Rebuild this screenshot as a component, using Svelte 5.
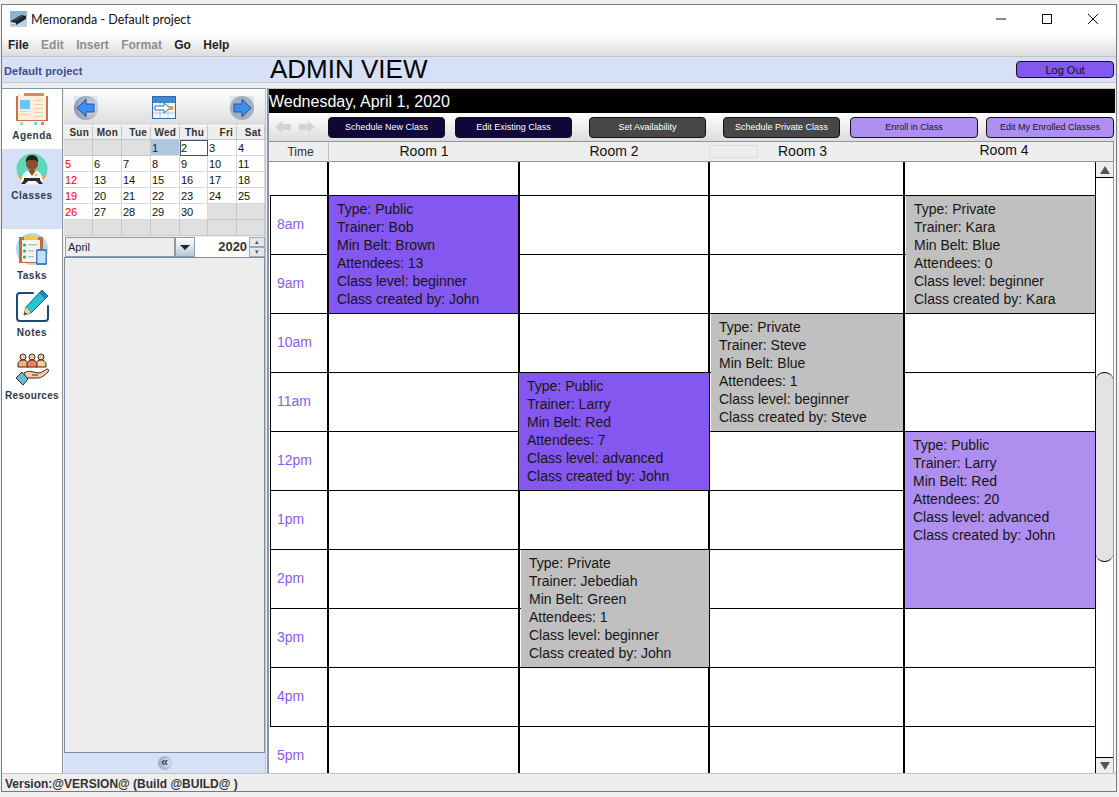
<script>
	const menus = [
		{ label: 'File' },
		{ label: 'Edit', off: true },
		{ label: 'Insert', off: true },
		{ label: 'Format', off: true },
		{ label: 'Go' },
		{ label: 'Help' }
	];
	const weekdays = ['Sun', 'Mon', 'Tue', 'Wed', 'Thu', 'Fri', 'Sat'];
	// April 2020 starts on a Wednesday, 6 rows of 7 cells
	const days = Array.from({ length: 42 }, (_, i) => {
		const n = i - 2;
		return n >= 1 && n <= 30 ? n : null;
	});
	const buttons = [
		{ label: 'Schedule New Class', kind: 'navy' },
		{ label: 'Edit Existing Class', kind: 'navy' },
		{ label: 'Set Availability', kind: 'slate' },
		{ label: 'Schedule Private Class', kind: 'slate' },
		{ label: 'Enroll in Class', kind: 'lilac' },
		{ label: 'Edit My Enrolled Classes', kind: 'lilac' }
	];
	const hours = ['', '8am', '9am', '10am', '11am', '12pm', '1pm', '2pm', '3pm', '4pm', '5pm'];
	const rooms = [2, 3, 4, 5];
	const events = [
		{ col: 2, row: 2, span: 2, left: 2, right: 0, kind: 'public', type: 'Public', trainer: 'Bob', belt: 'Brown', count: 13, level: 'beginner', by: 'John' },
		{ col: 5, row: 2, span: 2, left: 3, right: 1, kind: 'private', type: 'Private', trainer: 'Kara', belt: 'Blue', count: 0, level: 'beginner', by: 'Kara' },
		{ col: 4, row: 4, span: 2, left: 3, right: 0, kind: 'private', type: 'Private', trainer: 'Steve', belt: 'Blue', count: 1, level: 'beginner', by: 'Steve' },
		{ col: 3, row: 5, span: 2, left: 1, right: -1, kind: 'public', type: 'Public', trainer: 'Larry', belt: 'Red', count: 7, level: 'advanced', by: 'John' },
		{ col: 3, row: 8, span: 2, left: 3, right: -1, kind: 'private', type: 'Private', trainer: 'Jebediah', belt: 'Green', count: 1, level: 'beginner', by: 'John' },
		{ col: 5, row: 6, span: 3, left: 2, right: 1, kind: 'enrolled', type: 'Public', trainer: 'Larry', belt: 'Red', count: 20, level: 'advanced', by: 'John' }
	];
</script>

<div class="window">
	<div class="top">
		<div class="titlebar">
			<svg class="appicon" viewBox="0 0 17 16">
				<rect width="17" height="16" fill="#b9d3e6" />
				<path d="M0 0h17v6L0 11z" fill="#8fb4d0" />
				<path d="M1 10l10-6 5 1v3L6 14 1 13z" fill="#20262c" />
				<path d="M1 11l5 1v2l-5-1z" fill="#d8dde0" />
				<path d="M4 9l8-5 2 .5-8 5z" fill="#46525c" />
			</svg>
			<span class="title">Memoranda - Default project</span>
			<div class="controls">
				<svg viewBox="0 0 12 12"><path d="M1 6h10" stroke="#111" fill="none" /></svg>
				<svg viewBox="0 0 12 12"><rect x="1.5" y="1.5" width="9" height="9" stroke="#111" fill="none" /></svg>
				<svg viewBox="0 0 12 12"><path d="M1 1l10 10M11 1L1 11" stroke="#111" fill="none" /></svg>
			</div>
		</div>
		<div class="menubar">
			{#each menus as m}
				<span class:off={m.off}>{m.label}</span>
			{/each}
		</div>
	</div>

	<div class="projectbar">
		<span class="project">Default project</span>
		<span class="admin">ADMIN VIEW</span>
		<button class="logout">Log Out</button>
	</div>

	<div class="main">
		<div class="sidebar">
			<div class="nav agenda">
				<svg viewBox="0 0 34 34">
					<path d="M9 1h20v3H9z" fill="#d98a5b" />
					<path d="M3 3h2v2H3z" fill="#f4dc6a" />
					<path d="M1 4h32v25H1z" fill="#c9714a" />
					<path d="M3 4h14v24H3zM17 4h14v24H17z" fill="#fdeeda" />
					<path d="M5 8h10v9H5z" fill="#69c6ee" />
					<path d="M5 19h10v1H5zM5 22h10v1H5zM19 8h9v1h-9zM19 12h9v1h-9zM19 16h9v1h-9zM19 20h9v1h-9zM19 24h9v1h-9z" fill="#f2cfa6" />
					<path d="M5 30h3v3H5z" fill="#8fe3c4" />
					<path d="M19 30h3v3h-3z" fill="#6fd0ee" />
					<path d="M26 30h3v3h-3z" fill="#f0708a" />
				</svg>
				<span>Agenda</span>
			</div>
			<div class="nav classes">
				<svg viewBox="0 0 34 34">
					<circle cx="17" cy="17" r="15.5" fill="#5fd6ba" />
					<path d="M3 23c2 6 8 10 14 10s12-4 14-10l-3 1H6z" fill="#f0a03c" />
					<path d="M6 32c0-10 4-14 11-14s11 4 11 14c-3 1-19 1-22 0z" fill="#f6f8fa" />
					<path d="M13 18l4 6 4-6z" fill="#8a4f2c" />
					<circle cx="17" cy="12" r="6" fill="#8a4f2c" />
					<path d="M11 11c-1-6 3-8 6-8s7 2 6 8c-1-3-3-3-6-3s-5 0-6 3z" fill="#23221f" />
					<circle cx="21" cy="23" r="1.4" fill="#f0c040" />
					<path d="M9 26h16v2l3 4h-4l-3-3h-8l-3 3H6l3-4z" fill="#2a2c30" />
				</svg>
				<span>Classes</span>
			</div>
			<div class="nav tasks">
				<svg viewBox="0 0 34 34">
					<circle cx="17" cy="17" r="16" fill="#a8dcf6" />
					<path d="M4 5h24v26H4z" fill="#c9683c" />
					<path d="M7 8h18v22H7z" fill="#f8f4ea" />
					<path d="M11 3h10v2h2v3H9V5h2z" fill="#f5c64a" />
					<circle cx="9.500" cy="13" r="1.600" fill="#3aa578" />
					<circle cx="9.500" cy="19" r="1.600" fill="#3aa578" />
					<circle cx="9.500" cy="25" r="1.600" fill="#3aa578" />
					<path d="M13 12h9v1.500h-9zM13 18h6v1.500h-6zM13 24h6v1.500h-6z" fill="#a9c7dd" />
					<rect x="21" y="17" width="11" height="16" rx="1.500" fill="#3d86bd" />
					<rect x="22.500" y="19" width="8" height="12" fill="#bfe2f5" />
				</svg>
				<span>Tasks</span>
			</div>
			<div class="nav notes">
				<svg viewBox="0 0 34 34">
					<path d="M18 4H5a3 3 0 0 0-3 3v22a3 3 0 0 0 3 3h25a3 3 0 0 0 3-3V17" fill="none" stroke="#22486b" stroke-width="2" stroke-linecap="round" />
					<path d="M27 1l6 6-17 17-7 2 2-8z" fill="#28c3d0" stroke="#1c5f80" stroke-width="1" />
					<path d="M27 1l6 6-3 3-6-6z" fill="#2a7fc0" />
					<path d="M11 18l5 6-7 2z" fill="#f4d27a" />
					<path d="M9 26l.8-3 2.200 2z" fill="#1c3a5a" />
				</svg>
				<span>Notes</span>
			</div>
			<div class="nav resources">
				<svg viewBox="0 0 34 34">
					<g stroke="#3a2a24" stroke-width="1">
						<circle cx="8" cy="5" r="3" fill="#f9c89e" />
						<circle cx="26" cy="5" r="3" fill="#f9c89e" />
						<path d="M3 15v-3a5 4 0 0 1 10 0v3z" fill="#f6b078" />
						<path d="M21 15v-3a5 4 0 0 1 10 0v3z" fill="#f6d08c" />
						<circle cx="17" cy="5" r="3" fill="#f9c89e" />
						<path d="M12 15v-3a5 4 0 0 1 10 0v3z" fill="#f2805f" />
						<path d="M9 21c3-2 6-2 9-1l6 1c2 0 6-3 8-4 2 0 2 2 1 3-4 4-7 6-10 6H11z" fill="#fbcbaa" />
						<path d="M1 26l6-6 6 7-5 6z" fill="#5cc4d4" />
					</g>
					<path d="M17 23h6" stroke="#3a2a24" stroke-width="1" />
				</svg>
				<span>Resources</span>
			</div>
		</div>

		<div class="calendar">
			<div class="calnav">
				<svg class="round" viewBox="0 0 24 24">
					<defs>
						<radialGradient id="disc" cx="0.7" cy="0.5" r="0.7">
							<stop offset="0" stop-color="#dfe4ea" />
							<stop offset="1" stop-color="#8f99a8" />
						</radialGradient>
					</defs>
					<rect width="24" height="24" fill="#d9e6f4" />
					<circle cx="12" cy="12" r="12" fill="url(#disc)" />
					<path d="M3 12l9-9v5h8v8h-8v5z" fill="#3f8cea" stroke="#1c56b0" />
				</svg>
				<svg class="today" viewBox="0 0 24 24">
					<rect x="0.500" y="0.500" width="23" height="22" fill="#f2f6fb" stroke="#2f6ea8" />
					<rect x="1" y="1" width="22" height="6" fill="#3a8ccc" />
					<path d="M1 12h22M1 17h22M8 7v15M16 7v15" stroke="#b5cbe0" fill="none" />
					<path d="M3 10h9V7l6 5-6 5v-3H3z" fill="#fff" stroke="#2f6ea8" />
					<rect x="17" y="10" width="4" height="4" fill="#f29a2e" />
				</svg>
				<svg class="round" viewBox="0 0 24 24">
					<rect width="24" height="24" fill="#d9e6f4" />
					<circle cx="12" cy="12" r="12" fill="#a5aeba" />
					<path d="M21 12l-9-9v5H4v8h8v5z" fill="#3f8cea" stroke="#1c56b0" />
				</svg>
			</div>
			<div class="month">
				{#each weekdays as d}
					<div class="wd">{d}</div>
				{/each}
				{#each days as n, i}
					<div class="day" class:blank={!n} class:sun={i % 7 === 0} class:picked={n === 1} class:focus={n === 2}>{n ?? ''}</div>
				{/each}
			</div>
			<div class="picker">
				<div class="combo">April</div>
				<div class="drop"><i></i></div>
				<div class="year">2020</div>
				<div class="spin">
					<span>▴</span>
					<span>▾</span>
				</div>
			</div>
			<div class="blankpanel"></div>
			<div class="collapse">
				<span class="disc">«</span>
			</div>
		</div>

		<div class="split"></div>

		<div class="schedule">
			<div class="datebar">Wednesday, April 1, 2020</div>
			<div class="toolbar">
				<div class="arrows">
					<svg viewBox="0 0 16 14"><path d="M0 7l7-6v3h9v6H7v3z" fill="#d4d4d4" /></svg>
					<svg viewBox="0 0 16 14"><path d="M16 7L9 1v3H0v6h9v3z" fill="#d4d4d4" /></svg>
				</div>
				{#each buttons as b}
					<button class="act {b.kind}">{b.label}</button>
				{/each}
			</div>
			<div class="roomhead">
				<div class="h time">Time</div>
				<div class="h r1">Room 1</div>
				<div class="h r2">Room 2</div>
				<div class="h r3"><i></i>Room 3</div>
				<div class="h r4">Room 4</div>
			</div>
			<div class="body">
				<div class="grid">
					{#each hours as h, i}
						<div class="t" class:first={i === 0} class:last={i === 10} style="grid-row:{i + 1}">{h}</div>
						{#each rooms as c}
							<div class="c" class:end={c === 5} class:last={i === 10} style="grid-column:{c};grid-row:{i + 1}"></div>
						{/each}
					{/each}
					{#each events as e}
						<div class="event {e.kind}" style="grid-column:{e.col};grid-row:{e.row} / span {e.span};margin-left:{e.left}px;margin-right:{e.right}px">
							<div>Type: {e.type}</div>
							<div>Trainer: {e.trainer}</div>
							<div>Min Belt: {e.belt}</div>
							<div>Attendees: {e.count}</div>
							<div>Class level: {e.level}</div>
							<div>Class created by: {e.by}</div>
						</div>
					{/each}
				</div>
				<div class="scroll">
					<div class="sbtn up"><i></i></div>
					<div class="track"><div class="thumb"></div></div>
					<div class="sbtn down"><i></i></div>
				</div>
			</div>
		</div>
	</div>

	<div class="status">Version:@VERSION@ (Build @BUILD@ )</div>
</div>

<style>
	:global(body) {
		background: #f0f0f0;
	}
	* {
		box-sizing: border-box;
		font-family: 'Liberation Sans', Arial, sans-serif;
	}
	.window {
		margin: 4px 0 0 1px;
		width: 1116px;
		height: 788px;
		border: 1px solid #7a7a7a;
		display: flex;
		flex-direction: column;
		background: #eee;
		overflow: hidden;
	}
	.top {
		height: 52px;
		flex: none;
		background: linear-gradient(#fff 0, #fff 30px, #dcdcdc 100%);
		border-bottom: 1px solid #c4c4c4;
	}
	.titlebar {
		height: 28px;
		display: flex;
		align-items: center;
		padding-left: 8px;
	}
	.appicon {
		width: 17px;
		height: 16px;
		margin-right: 4px;
	}
	.title {
		font-family: Lato, sans-serif;
		font-size: 12.5px;
		color: #111;
	}
	.controls {
		margin-left: auto;
		display: flex;
		gap: 34px;
		padding-right: 17px;
	}
	.controls svg {
		width: 12px;
		height: 12px;
	}
	.menubar {
		display: flex;
		gap: 12.4px;
		padding: 5px 0 0 6px;
		font-size: 12px;
		font-weight: 700;
		color: #222;
	}
	.menubar span {
		font-weight: 700;
	}
	.menubar .off {
		color: #8e8e8e;
	}
	.projectbar {
		height: 26px;
		flex: none;
		display: flex;
		align-items: center;
		background: #d6e0f7;
		padding-left: 2px;
		border-bottom: 1px solid #c8c8c8;
	}
	.project {
		width: 266px;
		padding-top: 2px;
		font-size: 11px;
		font-weight: 700;
		color: #3f4d80;
		letter-spacing: 0.1px;
	}
	.admin {
		font-size: 26px;
		color: #000;
	}
	.logout {
		margin-left: auto;
		margin-right: 2px;
		width: 98px;
		height: 17px;
		padding: 0;
		background: #8458f0;
		border: 1px solid #111;
		border-radius: 4px;
		font-size: 11px;
		color: #111;
	}
	.main {
		margin-top: 5px;
		height: 685px;
		flex: none;
		display: flex;
	}
	.sidebar {
		width: 61px;
		flex: none;
		background: #fff;
		border-top: 1px solid #8a96a5;
		border-right: 1px solid #8a96a5;
	}
	.nav {
		display: flex;
		flex-direction: column;
		align-items: center;
		padding-top: 3px;
	}
	.nav svg {
		width: 34px;
		height: 34px;
	}
	.nav span {
		margin-top: 4px;
		font-size: 10px;
		font-weight: 700;
		color: #2f3a4a;
		letter-spacing: 0.5px;
	}
	.agenda {
		height: 60px;
	}
	.classes {
		height: 80px;
		background: #d6e0f7;
	}
	.tasks {
		height: 57px;
	}
	.notes {
		height: 63px;
	}
	.resources span {
		letter-spacing: 0.3px;
	}
	.calendar {
		width: 203px;
		flex: none;
		display: flex;
		flex-direction: column;
		padding-left: 1px;
		border-top: 1px solid #8a96a5;
		border-right: 1px solid #c4c4c4;
	}
	.calnav {
		height: 36px;
		padding: 7px 11px 0 10px;
		display: flex;
		justify-content: space-between;
		background: linear-gradient(#fff, #dcdcdc);
	}
	.calnav svg {
		width: 24px;
		height: 24px;
	}
	.month {
		display: grid;
		grid-template-columns: 29px 29px 29px 29px 28px 29px 28px;
		grid-template-rows: 15px repeat(6, 16px);
		background: #fff;
		width: 201px;
	}
	.wd {
		background: #eee;
		border-right: 1px solid #c0c6d0;
		border-bottom: 1px solid #c0c6d0;
		border-top: 1px solid #fff;
		font-size: 10px;
		font-weight: 700;
		text-align: right;
		padding-right: 3px;
		line-height: 13px;
		color: #333;
		letter-spacing: 0.2px;
	}
	.day {
		background: #fff;
		border-right: 1px solid #d8d8d8;
		border-bottom: 1px solid #d8d8d8;
		font-size: 11px;
		padding-left: 1px;
		line-height: 16px;
		color: #111;
	}
	.day.blank {
		background: #e0e0e0;
		border-color: #c8c8c8;
	}
	.day.sun {
		color: #f00;
	}
	.day.picked {
		background: #adc8df;
		color: #223;
	}
	.day.focus {
		border: 1px solid #4a4f78;
		padding-left: 0;
		line-height: 14px;
	}
	.picker {
		height: 20px;
		flex: none;
		margin-top: 1px;
		display: flex;
		background: #fff;
	}
	.combo {
		width: 111px;
		background: #eee;
		border: 1px solid #8a9bb0;
		font-size: 11px;
		line-height: 18px;
		padding-left: 2px;
		margin-left: 1px;
		color: #223;
	}
	.drop {
		width: 20px;
		background: linear-gradient(#fff, #b8c8da);
		border: 1px solid #8a9bb0;
		display: flex;
		align-items: center;
		justify-content: center;
	}
	.drop i {
		border: 5px solid transparent;
		border-top: 5px solid #222;
		border-bottom: 0;
	}
	.year {
		width: 54px;
		text-align: right;
		padding-right: 2px;
		font-size: 13px;
		font-weight: 700;
		line-height: 20px;
		color: #333;
	}
	.spin {
		width: 16px;
		display: flex;
		flex-direction: column;
	}
	.spin span {
		flex: 1;
		font-size: 7px;
		line-height: 8px;
		text-align: center;
		background: #e4e8ee;
		border: 1px solid #9aa8ba;
		color: #555;
	}
	.blankpanel {
		flex: 1;
		width: 201px;
		background: #ededed;
		border: 1px solid #7c8ca4;
	}
	.collapse {
		height: 20px;
		flex: none;
		width: 201px;
		background: #d6e0f7;
		display: flex;
		align-items: center;
		justify-content: center;
	}
	.disc {
		width: 14px;
		height: 14px;
		border-radius: 50%;
		background: radial-gradient(circle at 70% 50%, #dfe4ea, #8f99a8);
		color: #1c4aa0;
		font-size: 13px;
		font-weight: 700;
		line-height: 12px;
		text-align: center;
	}
	.split {
		width: 3px;
		flex: none;
		margin-left: 1px;
		background: #8a96a5;
		margin-right: -1px;
	}
	.schedule {
		width: 846px;
		flex: none;
		display: flex;
		flex-direction: column;
		border-top: 1px solid #c4c4c4;
	}
	.datebar {
		height: 24px;
		flex: none;
		background: #000;
		color: #fff;
		font-size: 16px;
		line-height: 26px;
	}
	.toolbar {
		height: 28px;
		flex: none;
		display: flex;
		align-items: center;
		padding-left: 6px;
		background: linear-gradient(#fff, #dcdcdc);
	}
	.arrows {
		display: flex;
		gap: 8px;
		width: 53px;
	}
	.arrows svg {
		width: 16px;
		height: 14px;
	}
	.act {
		height: 21px;
		padding: 0;
		border: 1px solid #111;
		border-radius: 4px;
		font-size: 9px;
		flex: none;
	}
	.act:nth-of-type(1),
	.act:nth-of-type(2),
	.act:nth-of-type(3),
	.act:nth-of-type(4) {
		width: 117px;
	}
	.act:nth-of-type(2) {
		margin-left: 10px;
	}
	.act:nth-of-type(3) {
		margin-left: 17px;
	}
	.act:nth-of-type(4) {
		margin-left: 17px;
	}
	.act:nth-of-type(5) {
		width: 128px;
		margin-left: 10px;
	}
	.act:nth-of-type(6) {
		width: 128px;
		margin-left: 8px;
	}
	.navy {
		background: #10063a;
		color: #fff;
	}
	.slate {
		background: #474747;
		color: #fff;
	}
	.lilac {
		background: #ae8ff0;
		color: #1a1030;
	}
	.roomhead {
		height: 21px;
		flex: none;
		display: grid;
		grid-template-columns: 60px 190px 190px 195px 1fr;
		background: #eee;
		border-top: 1px solid #8a96a5;
		border-bottom: 1px solid #8a96a5;
		border-right: 1px solid #8a96a5;
		margin-right: 1px;
		font-size: 14px;
		color: #111;
	}
	.h {
		text-align: center;
		line-height: 18px;
	}
	.h.time {
		font-size: 12px;
		line-height: 20px;
		padding-left: 4px;
		color: #333;
		border-right: 1px solid #c4c4c4;
	}
	.h.r3 {
		display: flex;
		align-items: flex-start;
	}
	.h.r3 i {
		width: 49px;
		height: 13px;
		margin: 3px 20px 0 0;
		border: 1px solid #ddd;
	}
	.h.r4 {
		padding-right: 9px;
		line-height: 16px;
	}
	.body {
		flex: none;
		height: 611px;
		display: flex;
		padding-left: 1px;
		background: #fff;
	}
	.grid {
		width: 826px;
		flex: none;
		display: grid;
		grid-template-columns: 57px 191px 190px 195px 193px;
		grid-template-rows: 34px repeat(9, 59px) 46px;
	}
	.t {
		grid-column: 1;
		border-left: 1px solid #000;
		border-bottom: 1px solid #000;
		font-size: 14px;
		color: #8a5cf0;
		padding: 20px 0 0 6px;
		line-height: 16px;
	}
	.t.first {
		border-left: 0;
	}
	.t.last {
		border-left: 0;
		border-bottom: 0;
		padding-left: 7px;
	}
	.c {
		border-left: 2px solid #000;
		border-bottom: 1px solid #000;
	}
	.c.end {
		border-right: 1px solid #000;
	}
	.c.last {
		border-bottom: 0;
	}
	.event {
		margin-bottom: 1px;
		padding: 4px 0 0 8px;
		font-size: 14px;
		line-height: 18px;
		color: #161616;
		z-index: 1;
	}
	.event.public {
		background: #8458f0;
	}
	.event.private {
		background: #c0c0c0;
	}
	.event.enrolled {
		background: #ae8ff0;
	}
	.scroll {
		width: 18px;
		flex: none;
		display: flex;
		flex-direction: column;
		border-right: 1px solid #8a96a5;
	}
	.sbtn {
		height: 16px;
		flex: none;
		background: #eee;
		display: flex;
		align-items: center;
		justify-content: center;
	}
	.sbtn.up {
		border-bottom: 1px solid #000;
	}
	.sbtn.down {
		border-top: 1px solid #000;
	}
	.sbtn i {
		border: 5px solid transparent;
	}
	.up i {
		border-top: 0;
		border-bottom: 8px solid #555;
	}
	.down i {
		border-bottom: 0;
		border-top: 8px solid #555;
	}
	.track {
		flex: 1;
		padding-top: 194px;
	}
	.thumb {
		height: 190px;
		background: #e3e3e3;
		border-top: 1px solid #000;
		border-bottom: 1px solid #000;
		border-radius: 9px / 8px;
	}
	.status {
		height: 18px;
		flex: none;
		font-size: 12px;
		font-weight: 700;
		line-height: 20px;
		padding-left: 3px;
		color: #333;
		border-top: 1px solid #c4c4c4;
	}
</style>
